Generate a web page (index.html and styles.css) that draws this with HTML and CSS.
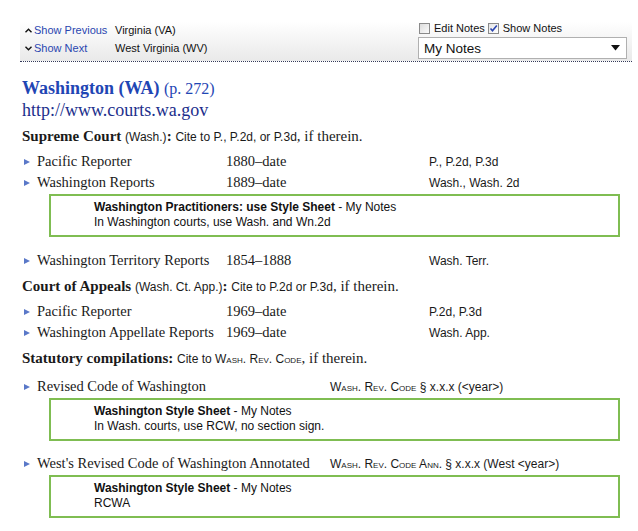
FILE: index.html
```html
<!DOCTYPE html>
<html>
<head>
<meta charset="utf-8">
<link rel="stylesheet" href="styles.css">
</head>
<body>
<div class="header">
  <div class="nav">
    <svg class="caret" width="7" height="5" viewBox="0 0 7 5"><path d="M0.5 4.2 L3.5 1.2 L6.5 4.2" fill="none" stroke="#111" stroke-width="1.4"/></svg>
    <span class="navlink">Show Previous</span>
    <span class="state">Virginia (VA)</span>
    <svg class="caret" width="7" height="5" viewBox="0 0 7 5"><path d="M0.5 0.8 L3.5 3.8 L6.5 0.8" fill="none" stroke="#111" stroke-width="1.4"/></svg>
    <span class="navlink">Show Next</span>
    <span class="state">West Virginia (WV)</span>
  </div>
  <div class="controls">
    <div class="checks">
      <span class="cbox"></span><span class="clabel">Edit Notes</span>
      <span class="cbox checked"><svg width="9" height="9" viewBox="0 0 9 9"><path d="M1.5 4.5 L3.5 6.8 L7.8 1.5" fill="none" stroke="#2b45b0" stroke-width="1.6"/></svg></span><span class="clabel">Show Notes</span>
    </div>
    <div class="select">
      <span>My Notes</span>
      <svg width="9" height="6" viewBox="0 0 9 6"><path d="M0 0 H9 L4.5 5.5 Z" fill="#111"/></svg>
    </div>
  </div>
</div>

<div class="content">
  <h1 class="title">Washington (WA) <span class="pageref">(p. 272)</span></h1>
  <div class="url">http://www.courts.wa.gov</div>

  <div class="court first"><b>Supreme Court</b> <span class="sans">(Wash.)</span><b>:</b> <span class="sans">Cite to P., P.2d, or P.3d</span>, if therein.</div>
  <div class="row">
    <span class="bullet"></span><span class="name">Pacific Reporter</span><span class="date">1880–date</span><span class="abbr">P., P.2d, P.3d</span>
  </div>
  <div class="row">
    <span class="bullet"></span><span class="name">Washington Reports</span><span class="date">1889–date</span><span class="abbr">Wash., Wash. 2d</span>
  </div>
  <div class="note">
    <div><b>Washington Practitioners: use Style Sheet</b> - My Notes</div>
    <div>In Washington courts, use Wash. and Wn.2d</div>
  </div>
  <div class="row after-note">
    <span class="bullet"></span><span class="name">Washington Territory Reports</span><span class="date">1854–1888</span><span class="abbr">Wash. Terr.</span>
  </div>

  <div class="court"><b>Court of Appeals</b> <span class="sans">(Wash. Ct. App.)</span><b>:</b> <span class="sans">Cite to P.2d or P.3d</span>, if therein.</div>
  <div class="row">
    <span class="bullet"></span><span class="name">Pacific Reporter</span><span class="date">1969–date</span><span class="abbr">P.2d, P.3d</span>
  </div>
  <div class="row">
    <span class="bullet"></span><span class="name">Washington Appellate Reports</span><span class="date">1969–date</span><span class="abbr">Wash. App.</span>
  </div>

  <div class="court"><b>Statutory compilations:</b> <span class="sans">Cite to <span class="sc">Wash. Rev. Code</span></span>, if therein.</div>
  <div class="row statute">
    <span class="bullet"></span><span class="name">Revised Code of Washington</span><span class="abbr"><span class="sc">Wash. Rev. Code</span> § x.x.x (&lt;year&gt;)</span>
  </div>
  <div class="note">
    <div><b>Washington Style Sheet</b> - My Notes</div>
    <div>In Wash. courts, use RCW, no section sign.</div>
  </div>
  <div class="row statute after-note">
    <span class="bullet"></span><span class="name">West's Revised Code of Washington Annotated</span><span class="abbr"><span class="sc">Wash. Rev. Code Ann.</span> § x.x.x (West &lt;year&gt;)</span>
  </div>
  <div class="note">
    <div><b>Washington Style Sheet</b> - My Notes</div>
    <div>RCWA</div>
  </div>
</div>
</body>
</html>
```
FILE: styles.css
```css
html, body {
  margin: 0;
  padding: 0;
  background: #fff;
}
body {
  font-family: "Liberation Serif", "Times New Roman", serif;
  color: #1a1a1a;
}

.header {
  margin-left: 20px;
  width: 612px;
  height: 41px;
  padding-top: 20px;
  border-bottom: 1px dotted #333a5a;
  background: linear-gradient(to bottom, #ffffff 35%, #e9e9e9 100%);
  display: flex;
  justify-content: space-between;
  font-family: "Liberation Sans", Arial, sans-serif;
}

.nav {
  display: grid;
  grid-template-columns: 14px 81px auto;
  grid-auto-rows: 18px;
  align-items: center;
  margin-top: 1px;
  font-size: 11px;
}
.caret {
  justify-self: end;
  margin-right: 2px;
}
.navlink {
  color: #2a46b0;
}
.state {
  color: #111;
}

.controls {
  width: 209px;
  margin-right: 5px;
  padding-top: 2px;
  display: flex;
  flex-direction: column;
  gap: 3px;
}
.checks {
  display: flex;
  align-items: center;
  height: 12px;
  font-size: 11px;
  color: #111;
  padding-left: 1px;
}
.cbox {
  width: 9px;
  height: 9px;
  border: 1px solid #8a8a8a;
  background: linear-gradient(135deg, #dcdcdc, #fbfbfb);
  display: inline-flex;
  align-items: center;
  justify-content: center;
  margin-right: 4px;
}
.cbox.checked {
  background: linear-gradient(135deg, #e4e4e4, #ffffff);
}
.clabel {
  margin-right: 3px;
}
.select {
  height: 20px;
  border: 1px solid #b0b0b0;
  background: #fff;
  display: flex;
  align-items: center;
  justify-content: space-between;
  padding: 0 6px 0 5px;
  font-size: 13.5px;
  color: #111;
}

.content {
  padding: 15px 18px 0 22px;
}
.title {
  margin: 0;
  font-size: 18px;
  line-height: 22px;
  font-weight: bold;
  color: #1f46b4;
}
.pageref {
  font-weight: normal;
  font-size: 16px;
}
.url {
  font-size: 18px;
  line-height: 20px;
  color: #1c2f8c;
}
.court {
  margin-top: 5px;
  margin-bottom: 4px;
  font-size: 15px;
  line-height: 20px;
}
.court.first {
  margin-top: 6px;
}
.sans {
  font-family: "Liberation Sans", Arial, sans-serif;
  font-size: 12px;
}
.sc {
  font-variant: small-caps;
}

.row {
  display: flex;
  align-items: center;
  height: 21px;
  font-size: 14.5px;
}
.bullet {
  width: 15px;
  display: inline-flex;
  align-items: center;
}
.bullet::before {
  content: "";
  margin-left: 2px;
  border-left: 6px solid #5a78c8;
  border-top: 3.5px solid transparent;
  border-bottom: 3.5px solid transparent;
}
.name {
  width: 189px;
}
.statute .name {
  width: 293px;
}
.date {
  width: 203px;
}
.abbr {
  font-family: "Liberation Sans", Arial, sans-serif;
  font-size: 12px;
}
.note {
  margin: 1px 0 0 27px;
  border: 2px solid #7fbd52;
  padding: 4px 10px 5px 43px;
  font-family: "Liberation Sans", Arial, sans-serif;
  font-size: 12px;
  line-height: 15px;
  color: #111;
}
.row.after-note {
  margin-top: 13px;
}
.row.statute {
  margin-top: 7px;
}
.row.statute.after-note {
  margin-top: 12px;
}
```
